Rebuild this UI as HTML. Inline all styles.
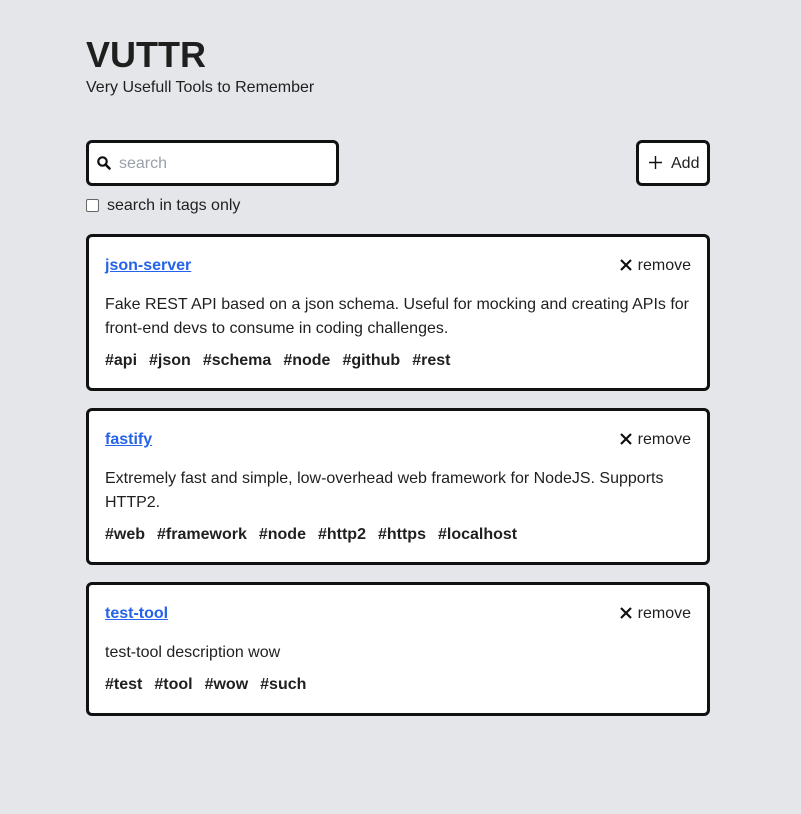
<!DOCTYPE html>
<html><head><style>
*{box-sizing:border-box;margin:0;padding:0}
body{background:#e5e6e9;font-family:"Liberation Sans",sans-serif;color:#1f1f1f;width:801px;height:814px;overflow:hidden}
h1{position:absolute;left:86px;top:34px;font-size:36px;line-height:42px;font-weight:bold}
.sub{position:absolute;left:86px;top:78px;font-size:16px;line-height:19px}
.search{position:absolute;left:86px;top:140px;width:253px;height:46px;border:3px solid #111;border-radius:6px;background:#fff}
.search span{position:absolute;left:30px;top:12px;font-size:16px;color:#9aa0a8}
.add{position:absolute;left:636px;top:140px;width:74px;height:46px;border:3px solid #111;border-radius:6px;background:#fff;font-size:16px}
.add span{position:absolute;left:32px;top:12px}
.chk{position:absolute;left:86px;top:199px;width:13px;height:13px;border:1px solid #666;border-radius:2px;background:#fff}
.chkl{position:absolute;left:107px;top:196px;font-size:16px;line-height:19px}
.card{position:absolute;left:86px;width:624px;border:3px solid #111;border-radius:6px;background:#fff;padding:17px 16px 16px 16px}
.row{height:24px;line-height:24px;position:relative}
.row a{color:#2563eb;font-weight:bold;text-decoration:underline;font-size:16px}
.rm{position:absolute;right:0;top:0;font-size:16px}
.rm svg{vertical-align:-1px;margin-right:6px}
.d{margin-top:15px;font-size:16px;line-height:24px}
.t{margin-top:8px;font-size:16px;line-height:24px;font-weight:bold}
.t b{margin-right:12px}
</style></head><body>
<h1>VUTTR</h1>
<div class="sub">Very Usefull Tools to Remember</div>
<div class="search"><svg style="position:absolute;left:8px;top:13px" width="14" height="14" viewBox="0 0 14 14"><circle cx="5.5" cy="5.5" r="4.2" fill="none" stroke="#111" stroke-width="2.2"/><path d="M8.5 8.5L12.5 12.5" stroke="#111" stroke-width="2.6" stroke-linecap="round"/></svg><span>search</span></div>
<div class="add"><svg style="position:absolute;left:10px;top:13px" width="13" height="13" viewBox="0 0 13 13"><path d="M6.5 0V13M0 6.5H13" stroke="#111" stroke-width="1.4"/></svg><span>Add</span></div>
<div class="chk"></div><div class="chkl">search in tags only</div>

<div class="card" style="top:234px;height:157px">
<div class="row"><a>json-server</a><span class="rm"><svg width="12" height="12" viewBox="0 0 12 12"><path d="M1 1L11 11M11 1L1 11" stroke="#111" stroke-width="2.2"/></svg>remove</span></div>
<div class="d">Fake REST API based on a json schema. Useful for mocking and creating APIs for front-end devs to consume in coding challenges.</div>
<div class="t"><b>#api</b><b>#json</b><b>#schema</b><b>#node</b><b>#github</b><b>#rest</b></div>
</div>

<div class="card" style="top:408px;height:157px">
<div class="row"><a>fastify</a><span class="rm"><svg width="12" height="12" viewBox="0 0 12 12"><path d="M1 1L11 11M11 1L1 11" stroke="#111" stroke-width="2.2"/></svg>remove</span></div>
<div class="d">Extremely fast and simple, low-overhead web framework for NodeJS. Supports HTTP2.</div>
<div class="t"><b>#web</b><b>#framework</b><b>#node</b><b>#http2</b><b>#https</b><b>#localhost</b></div>
</div>

<div class="card" style="top:582px;height:134px">
<div class="row"><a>test-tool</a><span class="rm"><svg width="12" height="12" viewBox="0 0 12 12"><path d="M1 1L11 11M11 1L1 11" stroke="#111" stroke-width="2.2"/></svg>remove</span></div>
<div class="d">test-tool description wow</div>
<div class="t"><b>#test</b><b>#tool</b><b>#wow</b><b>#such</b></div>
</div>
</body></html>
